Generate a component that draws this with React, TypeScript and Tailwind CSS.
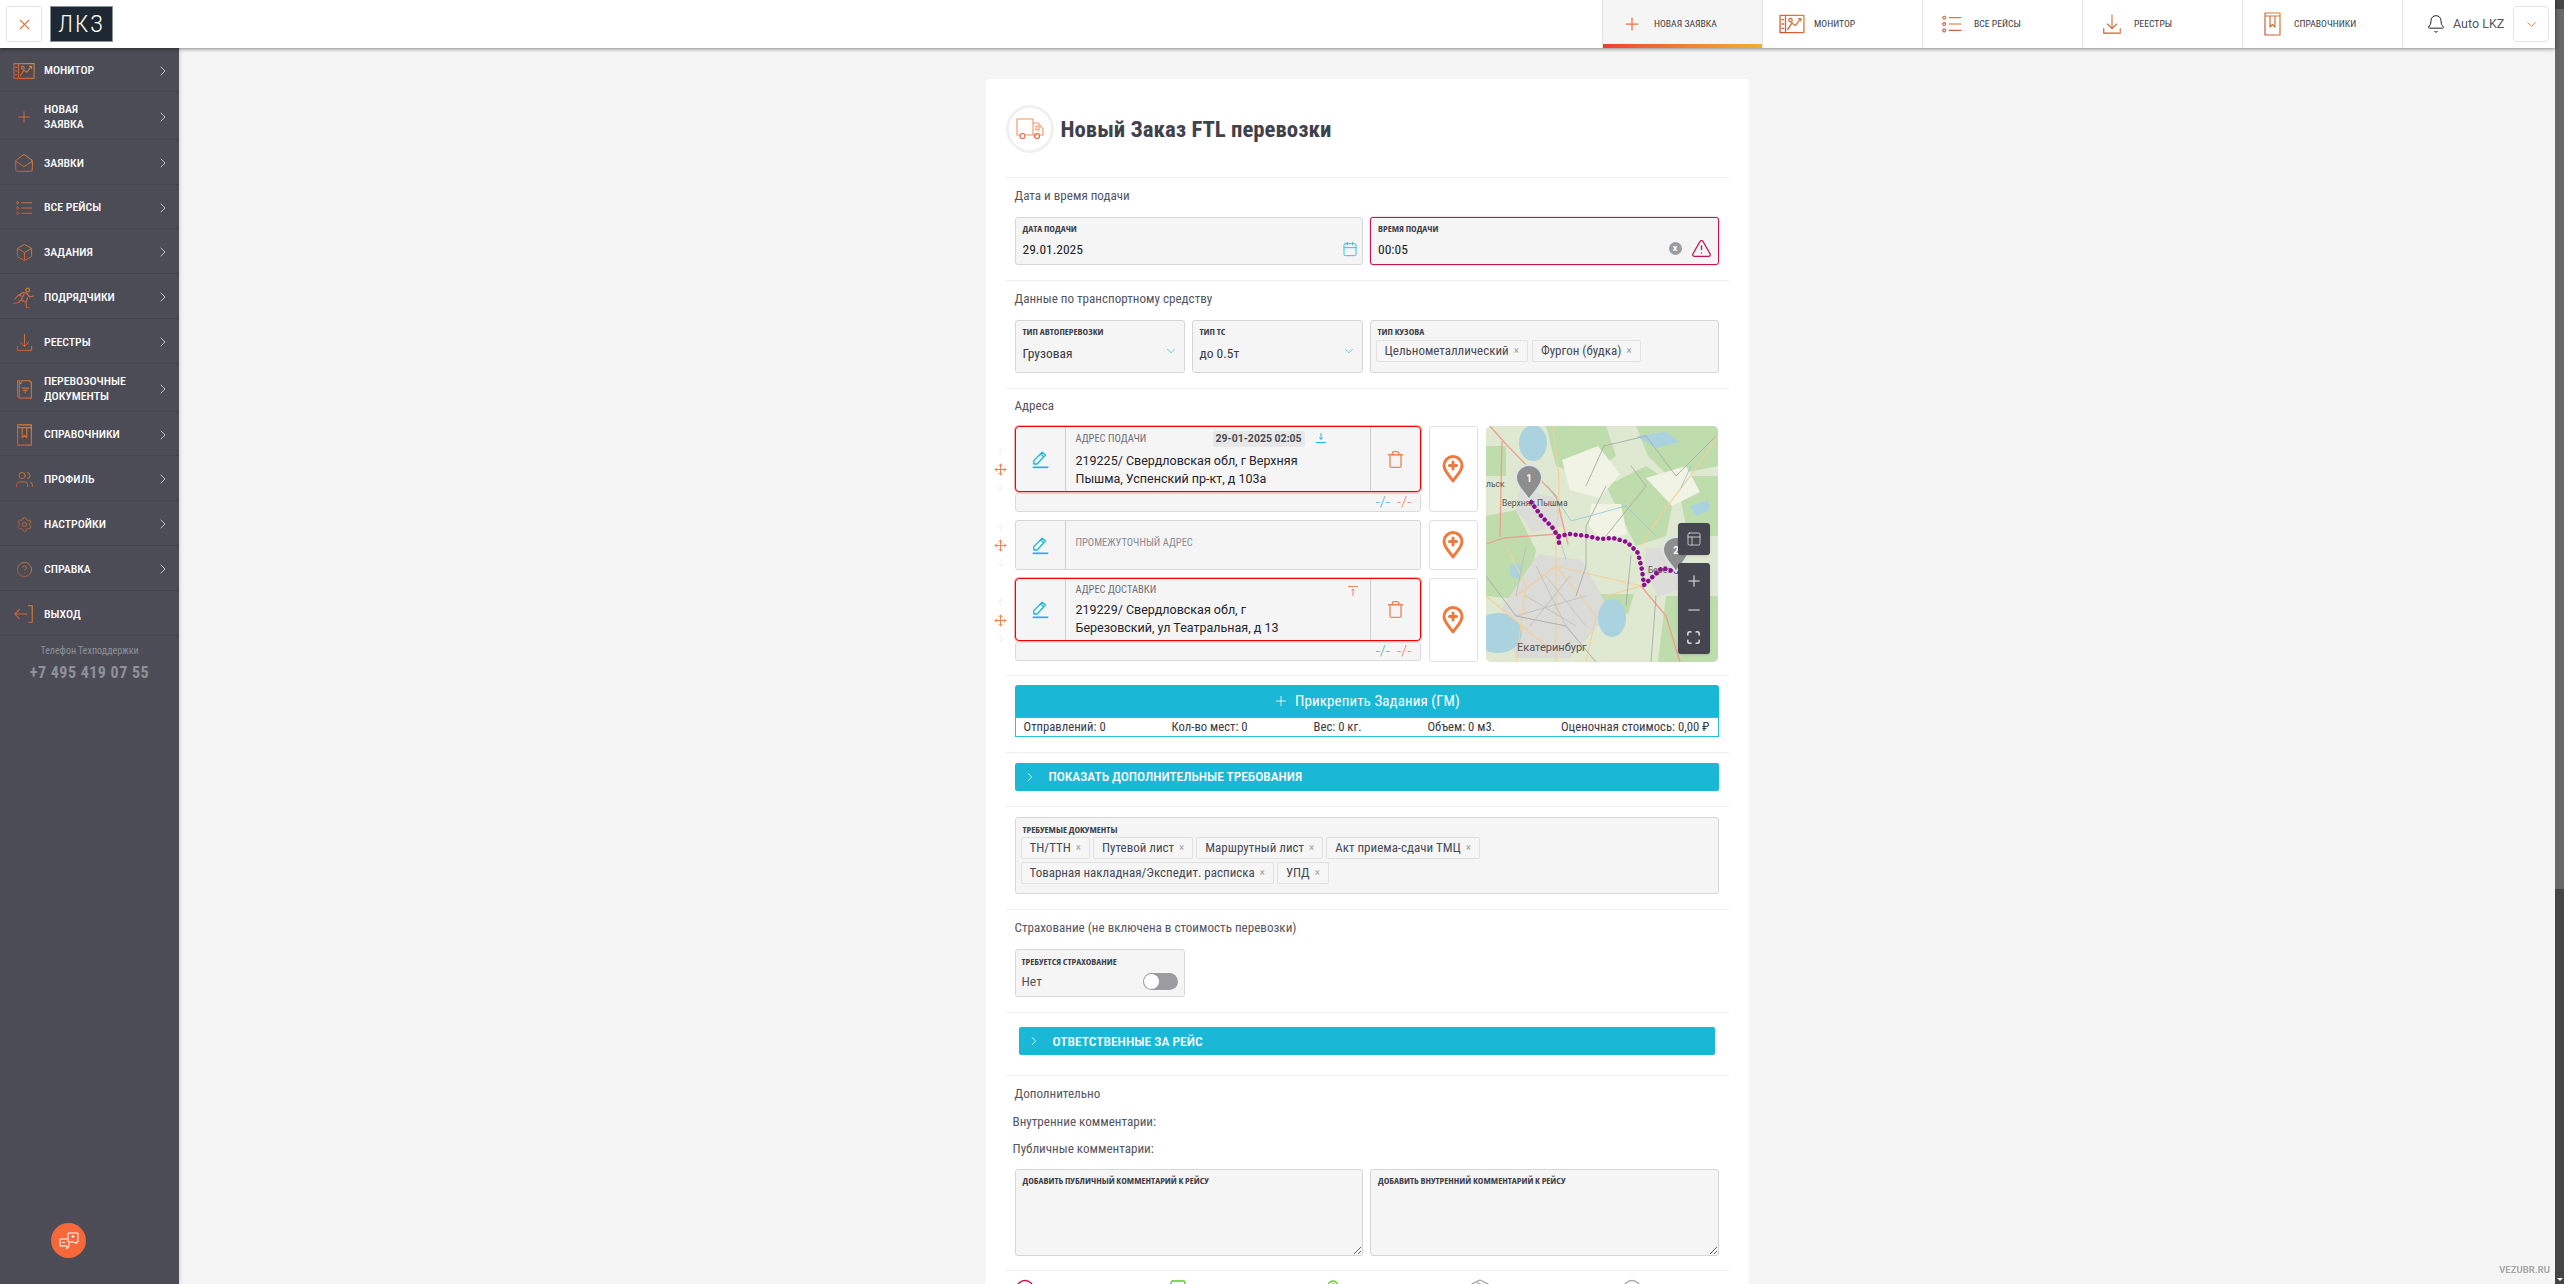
import React from "react";
import { Plus, ChevronRight, ChevronDown, X, Bell, MailOpen, Box, Users, Settings, CircleHelp, Calendar, TriangleAlert, Minus, PanelsTopLeft, Maximize, ArrowUp, ArrowDown, Move, Trash } from "lucide-react";

const G = "url(#og)";

const I = ({ children, w = 24, h = 24, sw = 1.2, c = G }: { children: React.ReactNode; w?: number; h?: number; sw?: number; c?: string }) => (
  <svg width={w} height={h} viewBox="0 0 24 24" fill="none" stroke={c} strokeWidth={sw} strokeLinecap="round" strokeLinejoin="round" className="shrink-0">{children}</svg>
);

const MonitorI = (p: { w?: number; h?: number }) => (
  <I {...p}><path d="M1 4h22v16H1zM6 4v16M2.800 8h1.500M2.800 12h1.500M2.800 16h1.500M8 17l4-6 3 2.500L20 7M18 7h2.200v2.200M9 8.500a1.600 1.600 0 1 0 3.200 0a1.600 1.600 0 1 0-3.200 0" /></I>
);
const ListI = (p: { w?: number; h?: number }) => (
  <I {...p}><path d="M3.500 3.500a1.600 1.600 0 1 0 .01 0M3.500 10.500a1.600 1.600 0 1 0 .01 0M3.500 17.500a1.600 1.600 0 1 0 .01 0M9 5h13M9 12h13M9 19h13" /></I>
);
const RegI = (p: { w?: number; h?: number }) => (
  <I {...p}><path d="M12 2v15M7 12l5 5 5-5M3 17v5h18v-5" /></I>
);
const BookI = (p: { w?: number; h?: number }) => (
  <I {...p}><path d="M5 1h15v22H5zM5 4h15M10 4v11l2.500-2.500L15 15V4" /></I>
);
const DocI = () => (
  <I w={22} h={22}><path d="M5 3h2v3h2V3h9l2 2v17H7l-2-2zM7 22V6M10 11h7M11.500 13.500h4M13.500 13.500v3" /></I>
);
const RunI = () => (
  <I w={22} h={22}><path d="M16 2.500a2 2 0 1 0 .01 0M6 10l5-3 4 1 3 4 4-1M12 9l-3 6 5 3 1 6M9 15l-3 3-5 1M16 13l-2 5M2 14l4-4 3 1M14 24h4" /></I>
);
const ExitI = () => (
  <I w={22} h={22}><path d="M2 12h13M7 7l-5 5 5 5M17 3h4v18h-4" /></I>
);

const menu: { l: React.ReactNode; i: React.ReactNode; h: string; noArrow?: boolean }[] = [
  { l: "МОНИТОР", i: <MonitorI w={22} h={22} />, h: "h-[44px]" },
  { l: <>НОВАЯ<br />ЗАЯВКА</>, i: <Plus size={18} color="#d9693a" strokeWidth={1.3} />, h: "h-[48px]" },
  { l: "ЗАЯВКИ", i: <MailOpen size={20} color={G} strokeWidth={1.2} />, h: "h-[45px]" },
  { l: "ВСЕ РЕЙСЫ", i: <ListI w={18} h={18} />, h: "h-[44px]" },
  { l: "ЗАДАНИЯ", i: <Box size={19} color={G} strokeWidth={1.2} />, h: "h-[45px]" },
  { l: "ПОДРЯДЧИКИ", i: <RunI />, h: "h-[45px]" },
  { l: "РЕЕСТРЫ", i: <RegI w={19} h={19} />, h: "h-[45px]" },
  { l: <>ПЕРЕВОЗОЧНЫЕ<br />ДОКУМЕНТЫ</>, i: <DocI />, h: "h-[48px]" },
  { l: "СПРАВОЧНИКИ", i: <BookI w={22} h={22} />, h: "h-[44px]" },
  { l: "ПРОФИЛЬ", i: <Users size={19} color={G} strokeWidth={1.1} />, h: "h-[45px]" },
  { l: "НАСТРОЙКИ", i: <Settings size={17} color={G} strokeWidth={1.1} />, h: "h-[45px]" },
  { l: "СПРАВКА", i: <CircleHelp size={17} color={G} strokeWidth={1.1} />, h: "h-[45px]" },
  { l: "ВЫХОД", i: <ExitI />, h: "h-[45px]", noArrow: true },
];

const top = [
  { l: "НОВАЯ ЗАЯВКА", i: <Plus size={20} color="#f0703a" strokeWidth={1.5} />, active: true },
  { l: "МОНИТОР", i: <MonitorI w={26} h={26} /> },
  { l: "ВСЕ РЕЙСЫ", i: <ListI w={22} h={22} /> },
  { l: "РЕЕСТРЫ", i: <RegI w={22} h={24} /> },
  { l: "СПРАВОЧНИКИ", i: <BookI w={24} h={28} /> },
];

const Divider = () => <div className="h-px bg-[#eeeeee]" />;

const Label = ({ children }: { children: React.ReactNode }) => (
  <div className="font-['Open_Sans',sans-serif] [font-stretch:75%] font-bold text-[9.5px] leading-[12px] text-[#41414b] uppercase">{children}</div>
);

const Title = ({ children, className = "" }: { children: React.ReactNode; className?: string }) => (
  <div className={`-mt-px h-4 [font-stretch:75%] text-[13.1px] leading-4 text-[#55555f] ${className}`}>{children}</div>
);

const Field = ({ label, className = "", children }: { label: string; className?: string; children?: React.ReactNode }) => (
  <div className={`relative rounded-[3px] border border-[#d6d6d6] bg-[#f5f5f5] px-[7px] pt-[5px] ${className}`}>
    <Label>{label}</Label>
    {children}
  </div>
);

const Chip = ({ t }: { t: string }) => (
  <span className="flex h-[22px] items-center gap-[5px] rounded-[2px] border border-[#e1e1e1] bg-[#f6f6f6] px-2 [font-stretch:75%] text-[13px] text-[#4a4a54] whitespace-nowrap">
    {t}<span className="text-[11px] text-[#a0a0a0]">×</span>
  </span>
);

const Value = ({ children, className = "" }: { children: React.ReactNode; className?: string }) => (
  <div className={`[font-stretch:75%] text-[13.5px] leading-[18px] ${className}`}>{children}</div>
);

const Handle = () => (
  <div className="flex w-[27px] shrink-0 flex-col items-center justify-center gap-[5px] pr-[1px]">
    <ArrowUp size={12} color="#f1f1f1" />
    <Move size={13} color="#ee7f4c" strokeWidth={1.8} />
    <ArrowDown size={12} color="#f1f1f1" />
  </div>
);

const Pin = () => (
  <div className="flex w-[49px] shrink-0 items-center justify-center rounded-[3px] border border-[#e0e0e0] bg-white">
    <svg width="22" height="28" viewBox="0 0 22 28" fill="none" stroke="#ee7a3e" strokeWidth="3" strokeLinecap="round" strokeLinejoin="round">
      <path d="M11 26C7 20 2 16 2 10.500a9 9 0 0 1 18 0C20 16 15 20 11 26z" />
      <path d="M11 7v7M7.500 10.500h7" />
    </svg>
  </div>
);

const EditCell = () => (
  <div className="flex w-[50px] shrink-0 items-center justify-center border-r border-[#cfcfcf]">
    <svg width="19" height="19" viewBox="0 0 17 17" fill="none" stroke="#1ab8d6" strokeWidth="1.200" strokeLinejoin="round">
      <path d="M2.500 12.500V9.500L10 2l3 2.500L5.500 12.500z" />
      <path d="M8.500 3.500l3 2.500" />
      <path d="M1.500 15.500h14" strokeWidth="1.500" />
    </svg>
  </div>
);

const DelCell = () => (
  <div className="flex w-[50px] shrink-0 items-center justify-center border-l border-[#cfcfcf]">
    <Trash size={19} color="#ee8557" strokeWidth={1.7} />
  </div>
);

const Sub = () => (
  <div className="mt-px flex h-[19px] items-center justify-end gap-[7px] rounded-[3px] border border-[#dadada] bg-[#f5f5f5] pr-[8px] text-[15px] font-light">
    <span className="text-[#2fb4d6]">-/-</span><span className="text-[#ee7a4a]">-/-</span>
  </div>
);

const AddrLabel = ({ children }: { children: React.ReactNode }) => (
  <div className="flex h-[16px] items-center [font-stretch:85%] text-[10.5px] text-[#6e6e78]">{children}</div>
);

const AddrText = ({ l1, l2 }: { l1: string; l2: string }) => (
  <div className="[font-stretch:90%] text-[12.5px] leading-[18px] text-[#24242c]"><div>{l1}</div><div>{l2}</div></div>
);

const MapView = () => (
  <div className="relative h-[236px] w-[232px] shrink-0 overflow-hidden rounded-[5px] bg-[#dfe9d2]">
    <svg width="232" height="236" viewBox="0 0 232 236" className="block">
      <g className="blur-[0.6px]">
        <g fill="#bfdcac">
          <path d="M60 0h60l10 30-30 20-30-10zM0 90l30-6 20 40-10 50L0 170zM120 60l40-20 30 20-10 50-30 10zM150 0h82v40l-50 10-20-20zM190 50h42v60l-30 0zM180 170h52v66h-60zM112 168l36 0-6 20-30 0zM0 20h20v30H0z" />
        </g>
        <g fill="#f1f3e4">
          <path d="M76 34l36-14 22 28-20 24-30-8zM160 52l40-12 14 26-28 14zM105 78l30 0 6 30-26 6-12-14z" />
        </g>
        <path d="M52 128l44 6 28 52-40 46H30l-14-50z" fill="#dbdbd8" />
        <path d="M34 62l34 10 10 28-32 6-16-22zM160 122h34l8 40-30 8-14-28z" fill="#dcdcd8" />
        <g fill="#aad3df">
          <ellipse cx="47" cy="17" rx="14" ry="18" />
          <ellipse cx="126" cy="192" rx="14" ry="19" />
          <ellipse cx="12" cy="207" rx="24" ry="20" />
          <ellipse cx="30" cy="145" rx="6" ry="8" />
          <path d="M150 10l30-4 14 10-24 6zM204 80l18-6 2 10-14 6z" />
        </g>
        <g fill="none" strokeLinecap="round" strokeLinejoin="round">
          <path d="M4 0L18 16L70 70L82 118M16 16L14 110M0 118L18 112L72 108" stroke="#ee9f90" strokeWidth="1.300" />
          <path d="M155 160L180 190L194 236" stroke="#ee9f90" strokeWidth="1.300" />
          <path d="M66 0C72 30 76 60 70 110L70 236M156 120C170 90 200 60 232 10M20 120L40 160L30 236M0 170L60 220M120 170L155 160L70 140L30 170M70 140L110 190L100 236" stroke="#f5cf98" strokeWidth="1.100" />
          <path d="M118 20L160 10L190 50L230 10M100 60L118 20M120 60L100 100L100 140L90 170M145 40L160 60L120 110M0 150L30 190L80 200L110 236M140 180L145 130M170 170L165 236" stroke="#aaaaaa" strokeWidth="0.900" />
          <path d="M72 108l8 25M40 120l-10 50M60 150l40 50M40 170l50 30M84 150l-40 50M50 140l30 60M30 190l70-20" stroke="#bdbdbd" strokeWidth="0.800" />
          <path d="M62 60L85 95L140 80L170 110M195 62L205 40" stroke="#8cc7d8" strokeWidth="0.800" />
        </g>
      </g>
      <text x="0" y="61" fontSize="8.500" fill="#555" fontFamily="Roboto, sans-serif">льск</text>
      <text x="16" y="80" fontSize="8.500" fill="#555" fontFamily="Roboto, sans-serif">Верхняя Пышма</text>
      <text x="162" y="147" fontSize="8.500" fill="#555" fontFamily="Roboto, sans-serif">Берёз</text>
      <text x="31" y="225" fontSize="11" fill="#555" fontFamily="Roboto, sans-serif">Екатеринбург</text>
      <path d="M45 76L56 91L66 101L73 112L73 119M73 110L84 108L101 110L114 113L127 112L141 116L152 127L156 144L158 159L176 142L191 146" fill="none" stroke="#8b0f8f" strokeWidth="4.500" strokeDasharray="0.1 5.500" strokeLinecap="round" />
      <g>
        <path d="M43 74C38 66 30 60 30 52a13 13 0 0 1 26 0C56 60 48 66 43 74z" fill="#8e8e8e" stroke="#dbe3e8" strokeWidth="2" />
        <text x="43" y="56" textAnchor="middle" fontSize="10" fontWeight="700" fill="#fff" fontFamily="Roboto, sans-serif">1</text>
        <path d="M190 146C185 138 177 132 177 124a13 13 0 0 1 26 0C203 132 195 138 190 146z" fill="#8e8e8e" stroke="#dbe3e8" strokeWidth="2" />
        <text x="190" y="128" textAnchor="middle" fontSize="10" fontWeight="700" fill="#fff" fontFamily="Roboto, sans-serif">2</text>
      </g>
    </svg>
    <div className="absolute right-2 top-[97px] flex h-8 w-8 items-center justify-center rounded-[3px] bg-[#45454f] shadow">
      <PanelsTopLeft size={16} color="#dddddd" strokeWidth={1.2} />
    </div>
    <div className="absolute right-2 top-[137px] flex h-[91px] w-8 flex-col items-center justify-around rounded-[3px] bg-[#45454f] py-[3px] shadow">
      <Plus size={18} color="#e8e8e8" strokeWidth={1.4} />
      <Minus size={18} color="#e8e8e8" strokeWidth={1.4} />
      <Maximize size={15} color="#ffffff" strokeWidth={2} />
    </div>
  </div>
);

const Bar = ({ t, className = "" }: { t: string; className?: string }) => (
  <div className={`flex h-[28px] items-center rounded-[2px] bg-[#1ab8d6] pl-[8px] text-white ${className}`}>
    <ChevronRight size={14} strokeWidth={1.4} />
    <span className="ml-[12px] [font-stretch:75%] font-medium uppercase">{t}</span>
  </div>
);

const docs1 = ["ТН/ТТН", "Путевой лист", "Маршрутный лист", "Акт приема-сдачи ТМЦ"];
const docs2 = ["Товарная накладная/Экспедит. расписка", "УПД"];

const sec = "pl-[9px] pr-[10px]";

const FootI = ({ k }: { k: number }) => {
  const s = { width: 20, height: 20, viewBox: "0 0 20 20", fill: "none", strokeWidth: 1.3 };
  if (k === 0) return <svg {...s} stroke="#c2144c"><circle cx="10" cy="10" r="8.500" /><path d="M10 5v7" /></svg>;
  if (k === 1) return <svg {...s} stroke="#5ecb1e"><path d="M4 2h12l2 4v12H2V6z" /></svg>;
  if (k === 2) return <svg {...s} stroke="#5ecb1e"><path d="M10 19C7 14 5 11 5 7a5 5 0 0 1 10 0c0 4-2 7-5 12z" /><circle cx="10" cy="7" r="2" /></svg>;
  if (k === 3) return <svg {...s} stroke="#a5a5a5"><path d="M10 1l8 4v10l-8 4-8-4V5zM2 5l8 4 8-4M10 9v10M6 3l8 4" /></svg>;
  return <svg {...s} stroke="#a5a5a5"><circle cx="10" cy="10" r="8.500" /><circle cx="10" cy="8" r="1.500" /></svg>;
};

export default function App() {
  return (
    <div className="flex h-screen overflow-hidden bg-[#f5f5f5] font-['Roboto',sans-serif] text-[#333]">
      <svg className="absolute h-0 w-0">
        <defs>
          <linearGradient id="og" gradientUnits="userSpaceOnUse" x1="0" y1="24" x2="24" y2="0">
            <stop offset="0" stopColor="#c94a35" />
            <stop offset="1" stopColor="#d98e38" />
          </linearGradient>
        </defs>
      </svg>
      <div className="flex min-w-0 flex-1 flex-col">
        <header className="relative z-10 flex h-12 shrink-0 items-center bg-white shadow-[0_1px_4px_rgba(0,0,0,0.45)]">
          <div className="ml-[6px] flex h-9 w-9 items-center justify-center rounded-[4px] border border-[#e4e4e4]">
            <X size={17} color="#f0703a" strokeWidth={1.5} />
          </div>
          <div className="ml-2 flex h-9 w-[63px] items-center justify-center border border-[#8d9297] bg-[#1e2833] [font-stretch:75%] text-[24px] font-light leading-none tracking-[2px] text-white">ЛКЗ</div>
          <nav className="ml-auto flex h-full">
            {top.map((t) => (
              <div key={t.l as string} className={`relative flex h-full w-40 items-center border-l border-[#e2e2e2] pl-[15px] ${t.active ? "bg-[#f5f5f5]" : ""}`}>
                <div className="flex w-[28px] items-center justify-center">{t.i}</div>
                <span className="ml-[8px] [font-stretch:75%] text-[9.7px] text-[#3c3c46] whitespace-nowrap">{t.l}</span>
                {t.active && <div className="absolute inset-x-0 bottom-0 h-1 bg-gradient-to-r from-[#ee3a36] to-[#eeb02a]" />}
              </div>
            ))}
            <div className="flex h-full w-[153px] items-center border-l border-[#e2e2e2] pl-[23px]">
              <Bell size={20} color="#222" strokeWidth={1.2} />
              <span className="ml-[7px] text-[12.5px] text-[#55555f] whitespace-nowrap">Auto LKZ</span>
              <div className="ml-[9px] flex h-9 w-9 shrink-0 items-center justify-center rounded-[4px] border border-[#e4e4e4]">
                <ChevronDown size={15} color="#f0703a" strokeWidth={1.5} />
              </div>
            </div>
          </nav>
        </header>
        <div className="flex min-h-0 flex-1">
          <aside className="relative w-[179px] shrink-0 bg-[#4c4c56] shadow-[1px_0_4px_rgba(0,0,0,0.15)]">
            {menu.map((m, i) => (
              <div key={i} className={`flex ${m.h} items-center border-b border-[#44444e] pt-[2px]`}>
                <div className="flex w-[44px] shrink-0 items-center justify-center pl-[4px]">{m.i}</div>
                <div className="flex-1 [font-stretch:75%] text-[11.8px] font-medium leading-[15px] text-white">{m.l}</div>
                {!m.noArrow && <ChevronRight size={16} color="#d4d4d8" strokeWidth={1.3} className="mr-[8px]" />}
              </div>
            ))}
            <div className="mt-[8px] text-center [font-stretch:75%] text-[10px] leading-[14px] text-[#8f9199]">Телефон Техподдержки</div>
            <div className="mt-[5px] text-center [font-stretch:75%] text-[16px] font-bold leading-[20px] tracking-[0.5px] text-[#8f9199]">+7 495 419 07 55</div>
            <div className="absolute bottom-[26px] left-[51px] flex h-[35px] w-[35px] items-center justify-center rounded-full bg-[#f4683a]">
              <svg width="20" height="18" viewBox="0 0 20 18" fill="none" stroke="#fff" strokeWidth="1">
                <path d="M9 1h10v9h-2v2l-2-2H9zM8 7H1v7h7v3l2-3h0v-3" />
                <path d="M14 3v3M12.500 4.500h3M3 10.500h3" />
              </svg>
            </div>
          </aside>
          <main className="flex flex-1 justify-center overflow-hidden pt-[31px]">
            <div className="w-[763px] shrink-0 self-start rounded-[4px] bg-white px-[20px]">
              <div className="flex h-[98px] pt-[26px]">
                <div className="flex h-12 w-12 items-center justify-center rounded-full border-[3px] border-[#f0f0f0]">
                  <svg width="28" height="26" viewBox="0 0 28 26" fill="none" stroke="#f0915c" strokeWidth="1.100" strokeLinecap="round" strokeLinejoin="round">
                    <path d="M1 3h16v16H10M1 3v16h2M17 7h5l5 6v6h-3M21 19h-3" />
                    <circle cx="6.500" cy="20" r="2.500" stroke="#e8603c" />
                    <circle cx="21" cy="20" r="2.500" stroke="#e8603c" />
                    <path d="M20 10h3v4h-3z" />
                  </svg>
                </div>
                <h1 className="ml-[7px] mt-[11px] h-[28px] [font-stretch:75%] text-[22.8px] font-bold leading-[28px] text-[#41414b]">Новый Заказ FTL перевозки</h1>
              </div>
              <Divider />

              <div className={`${sec} pb-[15px] pt-[11px]`}>
                <Title>Дата и время подачи</Title>
                <div className="mt-[13px] grid grid-cols-2 gap-[7px]">
                  <Field label="ДАТА ПОДАЧИ" className="h-12">
                    <Value className="mt-[5px] text-[#222]">29.01.2025</Value>
                    <Calendar size={16} color="#29bcd8" strokeWidth={1.4} className="absolute right-[4px] top-[23px]" />
                  </Field>
                  <Field label="ВРЕМЯ ПОДАЧИ" className="h-12 !border-[#c2144c] shadow-[0_0_2px_rgba(194,20,76,0.5)]">
                    <Value className="mt-[5px] text-[#222]">00:05</Value>
                    <div className="absolute right-[36px] top-[24px] flex h-[13px] w-[13px] items-center justify-center rounded-full bg-[#9a9ea3] text-[9px] font-bold leading-none text-white">x</div>
                    <TriangleAlert size={21} color="#c2144c" strokeWidth={1.5} className="absolute right-[6px] top-[20px]" />
                  </Field>
                </div>
              </div>
              <Divider />

              <div className={`${sec} pb-[15px] pt-[11px]`}>
                <Title>Данные по транспортному средству</Title>
                <div className="mt-[13px] flex gap-[7px]">
                  <Field label="ТИП АВТОПЕРЕВОЗКИ" className="h-[53px] w-[170px] shrink-0">
                    <Value className="mt-[6px] text-[#3a3a44]">Грузовая</Value>
                    <ChevronDown size={14} color="#29bcd8" strokeWidth={1.3} className="absolute right-[6px] top-[23px]" />
                  </Field>
                  <Field label="ТИП ТС" className="h-[53px] w-[171px] shrink-0">
                    <Value className="mt-[6px] text-[#3a3a44]">до 0.5т</Value>
                    <ChevronDown size={14} color="#29bcd8" strokeWidth={1.3} className="absolute right-[6px] top-[23px]" />
                  </Field>
                  <Field label="ТИП КУЗОВА" className="h-[53px] flex-1">
                    <div className="-ml-[2px] mt-[2px] flex gap-[4px]">
                      <Chip t="Цельнометаллический" />
                      <Chip t="Фургон (будка)" />
                    </div>
                  </Field>
                </div>
              </div>
              <Divider />

              <div className={`${sec} pb-[13px] pt-[10px]`}>
                <Title>Адреса</Title>
                <div className="-ml-[27px] mt-[12px] flex gap-2">
                  <div className="flex w-[490px] shrink-0 flex-col gap-2">
                    <div className="flex h-[86px]">
                      <Handle />
                      <div className="min-w-0 flex-1">
                        <div className="flex h-[66px] rounded-[4px] border border-[#f00000] bg-[#f5f5f5] shadow-[0_0_0_1px_rgba(255,0,0,0.3)]">
                          <EditCell />
                          <div className="relative flex-1 pl-[10px] pt-[4px]">
                            <AddrLabel>АДРЕС ПОДАЧИ</AddrLabel>
                            <div className="absolute left-[147px] top-[4px] rounded-[3px] bg-[#e8e8e8] px-[3px] [font-stretch:90%] text-[10.5px] font-bold leading-[16px] text-[#4a4a54] whitespace-nowrap">29-01-2025 02:05</div>
                            <svg width="12" height="12" viewBox="0 0 12 12" fill="none" stroke="#1ab8d6" className="absolute left-[249px] top-[5px]"><path d="M6 1v6M4.500 5.500L6 7.500L7.500 5.500M1 10.500h10" /></svg>
                            <div className="mt-[5px]"><AddrText l1="219225/ Свердловская обл, г Верхняя" l2="Пышма, Успенский пр-кт, д 103а" /></div>
                          </div>
                          <DelCell />
                        </div>
                        <Sub />
                      </div>
                      <div className="w-2 shrink-0" />
                      <Pin />
                    </div>
                    <div className="flex h-[50px]">
                      <Handle />
                      <div className="flex min-w-0 flex-1 rounded-[3px] border border-[#d6d6d6] bg-[#f5f5f5]">
                        <EditCell />
                        <div className="flex flex-1 pl-[10px] pt-[15px] [font-stretch:85%] text-[10.5px] leading-[14px] text-[#8a8a94]">ПРОМЕЖУТОЧНЫЙ АДРЕС</div>
                      </div>
                      <div className="w-2 shrink-0" />
                      <Pin />
                    </div>
                    <div className="flex h-[84px]">
                      <Handle />
                      <div className="min-w-0 flex-1">
                        <div className="flex h-[63px] rounded-[4px] border border-[#f00000] bg-[#f5f5f5] shadow-[0_0_0_1px_rgba(255,0,0,0.3)]">
                          <EditCell />
                          <div className="relative flex-1 pl-[10px] pt-[3px]">
                            <AddrLabel>АДРЕС ДОСТАВКИ</AddrLabel>
                            <svg width="12" height="12" viewBox="0 0 12 12" fill="none" stroke="#ee8557" className="absolute left-[281px] top-[6px]"><path d="M6 11V4M4.500 5.500L6 4L7.500 5.500M1 1.500h10" /></svg>
                            <div className="mt-[3px]"><AddrText l1="219229/ Свердловская обл, г" l2="Березовский, ул Театральная, д 13" /></div>
                          </div>
                          <DelCell />
                        </div>
                        <Sub />
                      </div>
                      <div className="w-2 shrink-0" />
                      <Pin />
                    </div>
                  </div>
                  <MapView />
                </div>
              </div>
              <Divider />

              <div className={`${sec} pb-[15px] pt-[9px]`}>
                <div className="flex h-8 items-center justify-center gap-[6px] rounded-t-[3px] bg-[#1ab8d6] text-white">
                  <Plus size={16} strokeWidth={1.2} />
                  <span className="[font-stretch:75%] text-[15px] tracking-[0.1px]">Прикрепить Задания (ГМ)</span>
                </div>
                <div className="flex h-[20px] items-center justify-between border border-[#2bc0da] px-2 [font-stretch:75%] text-[12.7px] leading-none text-[#3a3a44]">
                  <span>Отправлений: 0</span><span>Кол-во мест: 0</span><span>Вес: 0 кг.</span><span>Объем: 0 м3.</span><span>Оценочная стоимось: 0,00 ₽</span>
                </div>
              </div>
              <Divider />

              <div className={`${sec} pb-[15px] pt-[10px]`}>
                <Bar t="Показать дополнительные требования" className="text-[13.4px]" />
              </div>
              <Divider />

              <div className={`${sec} pb-[15px] pt-[10px]`}>
                <div className="h-[77px] rounded-[3px] border border-[#d6d6d6] bg-[#f5f5f5] px-[5px] pt-[6px]">
                  <div className="ml-[2px]"><Label>Требуемые документы</Label></div>
                  <div className="mt-[1px] flex flex-col gap-[3px]">
                    <div className="flex gap-[3px]">{docs1.map((d) => <Chip key={d} t={d} />)}</div>
                    <div className="flex gap-[3px]">{docs2.map((d) => <Chip key={d} t={d} />)}</div>
                  </div>
                </div>
              </div>
              <Divider />

              <div className={`${sec} pb-[15px] pt-[11px]`}>
                <Title>Страхование (не включена в стоимость перевозки)</Title>
                <div className="mt-[13px] flex h-12 w-[170px] flex-col rounded-[3px] border border-[#d6d6d6] bg-[#f5f5f5] px-[6px] pt-[6px]">
                  <Label>Требуется страхование</Label>
                  <div className="mt-[3px] flex items-center justify-between">
                    <span className="[font-stretch:75%] text-[13.5px] text-[#55555f]">Нет</span>
                    <div className="flex h-[17px] w-[35px] items-center rounded-full bg-[#9c9ca0] pl-[1px]"><div className="h-[15px] w-[15px] rounded-full bg-white" /></div>
                  </div>
                </div>
              </div>
              <Divider />

              <div className={`${sec} pb-[20px] pt-[14px]`}>
                <Bar t="Ответственные за рейс" className="mx-1 text-[13.5px]" />
              </div>
              <Divider />

              <div className={`${sec} pb-[14px] pt-[11px]`}>
                <Title>Дополнительно</Title>
                <Title className="-ml-[2px] mt-[12px]">Внутренние комментарии:</Title>
                <Title className="-ml-[2px] mt-[11px]">Публичные комментарии:</Title>
                <div className="mt-[12px] grid grid-cols-2 gap-[7px]">
                  <div className="h-[87px] resize overflow-auto rounded-[3px] border border-[#d6d6d6] bg-[#f5f5f5] px-[7px] pt-[5px]"><Label>Добавить публичный комментарий к рейсу</Label></div>
                  <div className="h-[87px] resize overflow-auto rounded-[3px] border border-[#d6d6d6] bg-[#f5f5f5] px-[7px] pt-[5px]"><Label>Добавить внутренний комментарий к рейсу</Label></div>
                </div>
              </div>
              <Divider />

              <div className={`${sec} flex pt-[8px] [font-stretch:75%] text-[13.5px]`}>
                {[
                  { w: "w-[153px]", t: "#c2144c", l: "Детали" },
                  { w: "w-[155px]", t: "#333", l: "Машина" },
                  { w: "w-[147px]", t: "#333", l: "Адрес" },
                  { w: "w-[152px]", t: "#888", l: "ГМ" },
                  { w: "w-[90px]", t: "#888", l: "Контакт" },
                ].map((f, k) => (
                  <div key={f.l} className={`flex ${f.w} items-start gap-[8px]`}>
                    <FootI k={k} />
                    <span style={{ color: f.t }} className="mt-[2px]">{f.l}</span>
                  </div>
                ))}
              </div>
              <div className="h-10" />
            </div>
          </main>
        </div>
      </div>
      <div className="flex w-[9px] shrink-0 flex-col bg-[#454545]">
        <div className="h-[9px]" />
        <div className="h-[880px] bg-[#686868]" />
        <div className="mt-auto flex h-[9px] items-center justify-center">
          <div className="h-0 w-0 border-x-[3px] border-t-[3px] border-x-transparent border-t-white" />
        </div>
      </div>
      <div className="pointer-events-none fixed bottom-[7px] right-[14px] text-[9.5px] font-bold text-[#a8a8a8]">VEZUBR.RU</div>
    </div>
  );
}
